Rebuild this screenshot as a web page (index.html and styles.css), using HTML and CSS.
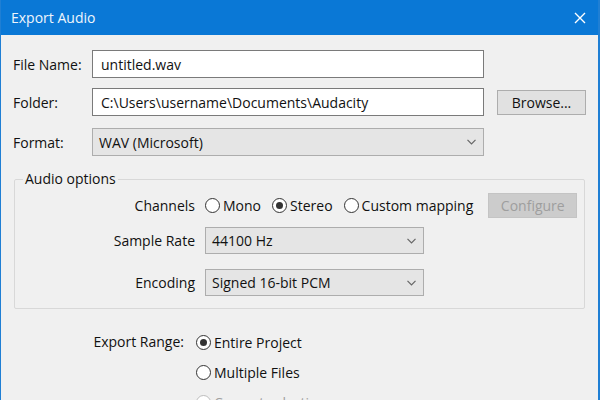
FILE: index.html
```html
<!DOCTYPE html>
<html lang="en">
<head>
    <meta charset="UTF-8">
    <title>Export Audio</title>
    <link rel="stylesheet" href="styles.css">
</head>
<body>

    <div class="dialog">
        <!-- Title bar -->
        <div class="titlebar">
            <span class="title">Export Audio</span>
            <svg class="close" width="12" height="12" viewBox="0 0 12 12">
                <path d="M1 1 L11 11 M11 1 L1 11" stroke="#fff" stroke-width="1.4" fill="none"/>
            </svg>
        </div>

        <div class="content">
            <div class="row">
                <span class="lbl">File Name:</span>
                <div class="field text">untitled.wav</div>
            </div>
            <div class="row">
                <span class="lbl">Folder:</span>
                <div class="field text">C:\Users\username\Documents\Audacity</div>
                <button class="btn">Browse...</button>
            </div>
            <div class="row">
                <span class="lbl">Format:</span>
                <div class="field select">
                    <span>WAV (Microsoft)</span>
                    <svg class="chevron" width="9" height="6" viewBox="0 0 9 6"><path d="M0.5 0.8 L4.5 4.8 L8.5 0.8" stroke="#666" stroke-width="1.2" fill="none"/></svg>
                </div>
            </div>

            <!-- Audio options group -->
            <fieldset class="group">
                <legend>Audio options</legend>
                <div class="opt-row">
                    <span class="opt-lbl">Channels</span>
                    <div class="radios">
                        <span class="radio"><span class="dot"></span>Mono</span>
                        <span class="radio checked"><span class="dot"></span>Stereo</span>
                        <span class="radio"><span class="dot"></span>Custom mapping</span>
                    </div>
                    <button class="btn disabled">Configure</button>
                </div>
                <div class="opt-row rate">
                    <span class="opt-lbl">Sample Rate</span>
                    <div class="field select small">
                        <span>44100 Hz</span>
                        <svg class="chevron" width="9" height="6" viewBox="0 0 9 6"><path d="M0.5 0.8 L4.5 4.8 L8.5 0.8" stroke="#666" stroke-width="1.2" fill="none"/></svg>
                    </div>
                </div>
                <div class="opt-row enc">
                    <span class="opt-lbl">Encoding</span>
                    <div class="field select small">
                        <span>Signed 16-bit PCM</span>
                        <svg class="chevron" width="9" height="6" viewBox="0 0 9 6"><path d="M0.5 0.8 L4.5 4.8 L8.5 0.8" stroke="#666" stroke-width="1.2" fill="none"/></svg>
                    </div>
                </div>
            </fieldset>

            <!-- Export range -->
            <div class="range">
                <span class="range-lbl">Export Range:</span>
                <div class="range-list">
                    <span class="radio checked"><span class="dot"></span>Entire Project</span>
                    <span class="radio"><span class="dot"></span>Multiple Files</span>
                    <span class="radio off"><span class="dot"></span>Current selection</span>
                </div>
            </div>
        </div>
    </div>

</body>
</html>
```

FILE: styles.css
```css
/* General */
body {
    margin: 0;
    font-family: 'Open Sans', 'Noto Sans', sans-serif;
    font-size: 14px;
    color: #111;
    background-color: #f0f0f0;
}

.dialog {
    width: 600px;
    height: 400px;
    box-sizing: border-box;
    border-left: 1px solid #1f7fd4;
    border-right: 2px solid #1f7fd4;
    background-color: #f0f0f0;
    overflow: hidden;
}

/* Title bar */
.titlebar {
    height: 35px;
    background-color: #0a78d6;
    display: flex;
    align-items: center;
    justify-content: space-between;
    padding: 0 12px 0 10px;
}

.title {
    color: #eef5fc;
    font-size: 14px;
}

/* Form rows */
.content {
    padding: 15px 11px 0 12px;
}

.row {
    display: flex;
    align-items: center;
    margin-bottom: 10px;
}

.row:nth-child(2) {
    margin-bottom: 12px;
}

.lbl {
    width: 79px;
    flex-shrink: 0;
}

.field {
    box-sizing: border-box;
    height: 28px;
    width: 392px;
    display: flex;
    align-items: center;
    padding: 0 8px;
}

.field.text {
    background-color: #fff;
    border: 1px solid #7a7a7a;
}

.field.select {
    background-color: #e5e5e5;
    border: 1px solid #adadad;
    justify-content: space-between;
    padding-right: 7px;
    padding-left: 6px;
}

.field.small {
    width: 219px;
    height: 27px;
}

.btn {
    font-family: inherit;
    font-size: 14px;
    color: #111;
    background-color: #e1e1e1;
    border: 1px solid #adadad;
    height: 25px;
    width: 89px;
    margin-left: 13px;
    padding: 0;
}

.btn.disabled {
    background-color: #cccccc;
    border-color: #c4c4c4;
    color: #9e9e9e;
    margin-left: 15px;
}

/* Audio options group */
.group {
    margin: 13px 0 0 1px;
    padding: 3px 0 12px 0;
    border: 1px solid #d8d8d8;
    border-radius: 2px;
    width: 571px;
    box-sizing: border-box;
}

.group legend {
    margin-left: 8px;
    padding: 0 2px;
    line-height: 20px;
}

.opt-row {
    display: flex;
    align-items: center;
    height: 26px;
}

.opt-row.rate {
    margin-top: 9px;
    height: 27px;
}

.opt-row.enc {
    margin-top: 15px;
    height: 27px;
}

.opt-lbl {
    width: 180px;
    text-align: right;
    margin-right: 10px;
    flex-shrink: 0;
}

.radios {
    display: flex;
    gap: 11px;
}

/* Radio buttons */
.radio {
    display: inline-flex;
    align-items: center;
}

.dot {
    width: 13px;
    height: 13px;
    border: 1px solid #333;
    border-radius: 50%;
    background-color: #fff;
    margin-right: 3px;
    display: inline-flex;
    align-items: center;
    justify-content: center;
}

.radio.checked .dot::after {
    content: '';
    width: 7px;
    height: 7px;
    border-radius: 50%;
    background-color: #333;
}

.radio.off {
    color: #a0a0a0;
}

.radio.off .dot {
    border-color: #bcbcbc;
}

/* Export range */
.range {
    display: flex;
    margin-top: 18px;
}

.range-lbl {
    width: 171px;
    text-align: right;
    margin-right: 12px;
    line-height: 30px;
}

.range-list {
    display: flex;
    flex-direction: column;
}

.range-list .radio {
    height: 30px;
}
```
